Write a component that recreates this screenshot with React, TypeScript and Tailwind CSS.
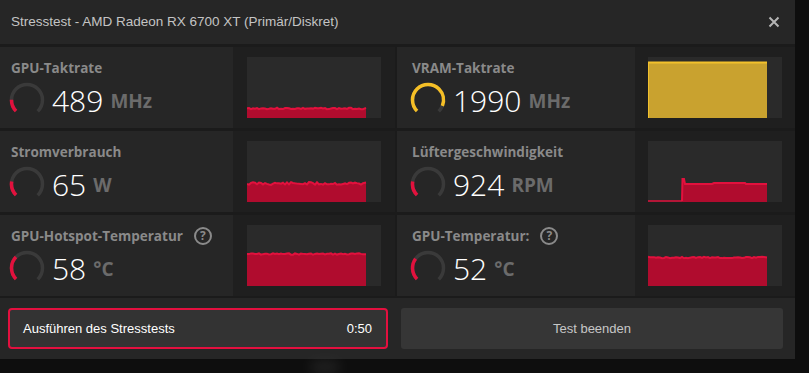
import React from "react";

const C = 2 * Math.PI * 15.5;

function Gauge({ frac, color }: { frac: number; color: string }) {
  return (
    <svg width="36" height="36" viewBox="0 0 36 36" className="shrink-0">
      <circle
        cx="18"
        cy="18"
        r="15.5"
        fill="none"
        stroke="#3a3a3a"
        strokeWidth="3.5"
        strokeDasharray={`${0.75 * C} ${C}`}
        transform="rotate(135 18 18)"
      />
      <circle
        cx="18"
        cy="18"
        r="15.5"
        fill="none"
        stroke={color}
        strokeWidth="3.5"
        strokeDasharray={`${frac * 0.75 * C} ${C}`}
        transform="rotate(135 18 18)"
      />
    </svg>
  );
}

function rng(seed: number) {
  let s = seed;
  return () => {
    s = (s * 9301 + 49297) % 233280;
    return s / 233280;
  };
}

function series(base: number, amp: number, seed: number, end = 119): [number, number][] {
  const r = rng(seed);
  const pts: [number, number][] = [];
  for (let x = 0; x <= end; x += 2) {
    pts.push([x, base + (r() - 0.5) * amp]);
  }
  pts[pts.length - 1][0] = end;
  return pts;
}

const RED_FILL = "#b00c2e";
const RED_LINE = "#e2113d";

function AreaPoly({ pts }: { pts: [number, number][] }) {
  const first = pts[0];
  const last = pts[pts.length - 1];
  const top = pts.map((p) => `${p[0]},${p[1]}`).join(" ");
  const area = `${first[0]},61 ${top} ${last[0]},61`;
  return (
    <>
      <polygon points={area} fill={RED_FILL} />
      <polyline points={top} fill="none" stroke={RED_LINE} strokeWidth="2" />
    </>
  );
}

function AreaChart({ pts }: { pts: [number, number][] }) {
  return (
    <svg width="134" height="61" viewBox="0 0 134 61" className="block">
      <AreaPoly pts={pts} />
    </svg>
  );
}

function HelpIcon() {
  return (
    <span className="ml-[11px] inline-flex h-[18px] w-[18px] items-center justify-center rounded-full border-2 border-[#8a8a8a] text-[12px] font-bold leading-none text-[#8a8a8a]">
      ?
    </span>
  );
}

type Metric = {
  label: string;
  help?: boolean;
  value: string;
  unit: string;
  frac: number;
  color: string;
  chart: React.ReactNode;
};

const OPEN = { fontFamily: '"Open Sans", sans-serif' };
const NARROW = { fontFamily: '"Liberation Sans Narrow", "Liberation Sans", sans-serif' };

function LabelCard({ m, pl, w }: { m: Metric; pl: string; w: string }) {
  return (
    <div className={`${w} ${pl} flex flex-col bg-[#262626] pt-[12px]`}>
      <div className="ml-[2px] flex h-[18px] items-center text-[13.5px] font-bold text-[#8a8a8a]" style={OPEN}>
        {m.label}
        {m.help && <HelpIcon />}
      </div>
      <div className="mt-[5px] flex items-center">
        <Gauge frac={m.frac} color={m.color} />
        <span className="ml-[7px] mt-[1px] text-[30px] font-light leading-none text-white" style={OPEN}>
          {m.value}
        </span>
        <span className="ml-[7px] mt-[3px] text-[19px] font-bold leading-none text-[#6b6b6b]" style={OPEN}>
          {m.unit}
        </span>
      </div>
    </div>
  );
}

function ChartCell({ children, w, px }: { children: React.ReactNode; w: string; px: string }) {
  return (
    <div className={`${w} ${px} flex items-center bg-[#1f1f1f]`}>
      <div className="h-[61px] w-[134px] bg-[#2a2a2a]">{children}</div>
    </div>
  );
}

export default function App() {
  const fanPts: [number, number][] = [
    [34, 60],
    [34.5, 38],
    [36, 38],
    [37, 43],
    [64, 43],
    [66, 42],
    [97, 42],
    [98, 43],
    [119, 43],
  ];

  const left: Metric[] = [
    {
      label: "GPU-Taktrate",
      value: "489",
      unit: "MHz",
      frac: 0.17,
      color: "#e2113d",
      chart: <AreaChart pts={series(51.5, 1.5, 3)} />,
    },
    {
      label: "Stromverbrauch",
      value: "65",
      unit: "W",
      frac: 0.2,
      color: "#e2113d",
      chart: <AreaChart pts={series(42.5, 3, 11)} />,
    },
    {
      label: "GPU-Hotspot-Temperatur",
      help: true,
      value: "58",
      unit: "°C",
      frac: 0.33,
      color: "#e2113d",
      chart: <AreaChart pts={series(29, 1.5, 7)} />,
    },
  ];

  const right: Metric[] = [
    {
      label: "VRAM-Taktrate",
      value: "1990",
      unit: "MHz",
      frac: 0.91,
      color: "#f5bf26",
      chart: (
        <svg width="134" height="61" viewBox="0 0 134 61" className="block">
          <rect x="0" y="5" width="119" height="56" fill="#c9a22f" />
          <line x1="0" y1="5.5" x2="119" y2="5.5" stroke="#f3c12c" strokeWidth="2" />
          <line x1="0.5" y1="5" x2="0.5" y2="61" stroke="#f3c12c" strokeWidth="1" />
        </svg>
      ),
    },
    {
      label: "Lüftergeschwindigkeit",
      value: "924",
      unit: "RPM",
      frac: 0.2,
      color: "#e2113d",
      chart: (
        <svg width="134" height="61" viewBox="0 0 134 61" className="block">
          <line x1="0" y1="60" x2="34" y2="60" stroke={RED_LINE} strokeWidth="1.5" />
          <AreaPoly pts={fanPts} />
        </svg>
      ),
    },
    {
      label: "GPU-Temperatur:",
      help: true,
      value: "52",
      unit: "°C",
      frac: 0.3,
      color: "#e2113d",
      chart: <AreaChart pts={series(32.5, 1.5, 21)} />,
    },
  ];

  return (
    <div className="relative h-[373px] w-[809px] overflow-hidden bg-[#0e0e0e]">
      <div className="w-[795px] bg-[#1b1b1b]">
        <div className="flex h-[44px] items-center justify-between bg-[#262626] pl-[11px] pr-[11px]">
          <span className="text-[13.5px] text-[#c4c4c4]" style={NARROW}>
            Stresstest - AMD Radeon RX 6700 XT (Primär/Diskret)
          </span>
          <svg width="12" height="12" viewBox="0 0 12 12" className="mr-[4px]">
            <path d="M1.5 1.5 L10.5 10.5 M10.5 1.5 L1.5 10.5" stroke="#b4b4b4" strokeWidth="2" />
          </svg>
        </div>
        <div className="flex flex-col gap-[3px] pt-[3px]">
          {left.map((m, i) => (
            <div key={i} className="flex h-[81px] gap-[2px]">
              <div className="flex">
                <LabelCard m={m} pl="pl-[9px]" w="w-[233px]" />
                <ChartCell w="w-[162px]" px="pl-[14px]">{m.chart}</ChartCell>
              </div>
              <div className="flex">
                <LabelCard m={right[i]} pl="pl-[13px]" w="w-[238px]" />
                <ChartCell w="w-[160px]" px="pl-[13px]">{right[i].chart}</ChartCell>
              </div>
            </div>
          ))}
        </div>
        <div className="mt-[2px] flex h-[61px] items-start gap-[13px] bg-[#262626] pl-[8px] pr-[12px] pt-[10px]" style={NARROW}>
          <div className="flex h-[41px] w-[380px] items-center justify-between rounded-[4px] border-2 border-[#e3103f] bg-[#333333] pl-[13px] pr-[14px] text-[13px] text-white">
            <span>Ausführen des Stresstests</span>
            <span>0:50</span>
          </div>
          <div className="flex h-[41px] w-[382px] items-center justify-center rounded-[3px] bg-[#363636] text-[13px] text-[#c6c6c6]">
            Test beenden
          </div>
        </div>
      </div>
      <div className="absolute left-[310px] top-[360px] h-[14px] w-[30px] rounded-full bg-[#3a3a3a] opacity-40 blur-[6px]" />
    </div>
  );
}
